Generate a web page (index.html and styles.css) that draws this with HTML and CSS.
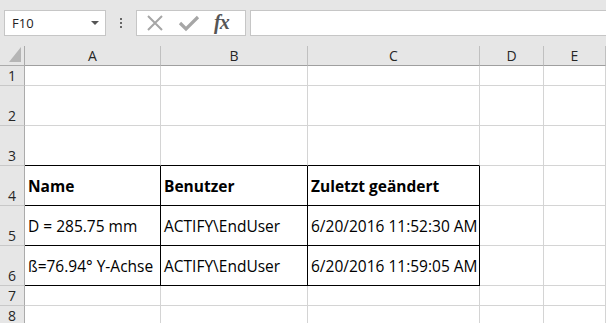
FILE: index.html
```html
<!DOCTYPE html>
<html lang="de">
<head>
    <meta charset="UTF-8">
    <title>Mappe1 - Excel</title>
    <link rel="stylesheet" href="styles.css">
</head>
<body>
    <div class="formula-bar">
        <div class="name-box">
            <span>F10</span>
            <span class="caret"></span>
        </div>
        <div class="grip"><i></i><i></i><i></i></div>
        <div class="fx-buttons">
            <svg class="icon-cancel" width="18" height="18" viewBox="0 0 18 18">
                <path d="M2 2 L16 16 M16 2 L2 16" stroke="#a6a6a6" stroke-width="2" fill="none"/>
            </svg>
            <svg class="icon-enter" width="22" height="18" viewBox="0 0 22 18">
                <path d="M2 9 L8 15 L20 3" stroke="#a6a6a6" stroke-width="3.2" fill="none"/>
            </svg>
            <span class="fx">fx</span>
        </div>
        <div class="formula-input"></div>
    </div>

    <div class="sheet">
        <div class="corner"><span class="corner-mark"></span></div>
        <div class="col-head">A</div>
        <div class="col-head">B</div>
        <div class="col-head">C</div>
        <div class="col-head">D</div>
        <div class="col-head">E</div>

        <div class="row-head">1</div>
        <div class="cell"></div><div class="cell"></div><div class="cell"></div><div class="cell"></div><div class="cell"></div>

        <div class="row-head">2</div>
        <div class="cell"></div><div class="cell"></div><div class="cell"></div><div class="cell"></div><div class="cell"></div>

        <div class="row-head">3</div>
        <div class="cell edge-bottom"></div><div class="cell edge-bottom"></div><div class="cell edge-bottom"></div><div class="cell"></div><div class="cell"></div>

        <div class="row-head">4</div>
        <div class="cell boxed bold">Name</div>
        <div class="cell boxed bold">Benutzer</div>
        <div class="cell boxed bold">Zuletzt geändert</div>
        <div class="cell"></div><div class="cell"></div>

        <div class="row-head">5</div>
        <div class="cell boxed">D = 285.75 mm</div>
        <div class="cell boxed">ACTIFY\EndUser</div>
        <div class="cell boxed">6/20/2016 11:52:30 AM</div>
        <div class="cell"></div><div class="cell"></div>

        <div class="row-head">6</div>
        <div class="cell boxed">ß=76.94° Y-Achse</div>
        <div class="cell boxed">ACTIFY\EndUser</div>
        <div class="cell boxed">6/20/2016 11:59:05 AM</div>
        <div class="cell"></div><div class="cell"></div>

        <div class="row-head">7</div>
        <div class="cell"></div><div class="cell"></div><div class="cell"></div><div class="cell"></div><div class="cell"></div>

        <div class="row-head">8</div>
        <div class="cell"></div><div class="cell"></div><div class="cell"></div><div class="cell"></div><div class="cell"></div>
    </div>
</body>
</html>
```

FILE: styles.css
```css
* {
    box-sizing: border-box;
}
body {
    margin: 0;
    width: 606px;
    height: 323px;
    overflow: hidden;
    background: #fff;
    font-family: 'Open Sans', 'Noto Sans', sans-serif;
    color: #000;
}
.formula-bar {
    height: 46px;
    background: #e6e6e6;
    display: flex;
    align-items: flex-start;
    padding: 10px 0 0 4px;
}
.name-box {
    width: 102px;
    height: 26px;
    background: #fff;
    border: 1px solid #c6c6c6;
    display: flex;
    align-items: center;
    justify-content: space-between;
    padding: 0 6px 0 7px;
    font-size: 13px;
    color: #222;
}
.caret {
    width: 0;
    height: 0;
    border-left: 4px solid transparent;
    border-right: 4px solid transparent;
    border-top: 4px solid #555;
}
.grip {
    width: 30px;
    height: 26px;
    display: flex;
    flex-direction: column;
    align-items: center;
    justify-content: center;
    gap: 2px;
}
.grip i {
    width: 2px;
    height: 2px;
    background: #666;
}
.fx-buttons {
    width: 110px;
    height: 26px;
    background: #fff;
    border: 1px solid #c6c6c6;
    display: flex;
    align-items: center;
    padding-left: 9px;
}
.icon-cancel {
    margin-right: 14px;
}
.icon-enter {
    margin-right: 14px;
}
.fx {
    font-family: 'Liberation Serif', serif;
    font-style: italic;
    font-weight: bold;
    font-size: 20px;
    color: #555;
    letter-spacing: -1px;
    line-height: 1;
    margin-top: -2px;
}
.formula-input {
    flex: 1;
    height: 26px;
    margin-left: 4px;
    background: #fff;
    border: 1px solid #c6c6c6;
    border-right: none;
}
.sheet {
    display: grid;
    grid-template-columns: 25px 136px 147px 172px 64px 1fr;
    grid-template-rows: 20px 20px 40px 40px 40px 40px 40px 20px 20px;
}
.corner, .col-head, .row-head {
    background: #e6e6e6;
    color: #262626;
}
.corner {
    border-right: 1px solid #ababab;
    border-bottom: 1px solid #ababab;
    position: relative;
}
.corner-mark {
    position: absolute;
    right: 3px;
    bottom: 3px;
    width: 0;
    height: 0;
    border-left: 12px solid transparent;
    border-bottom: 15px solid #b5b5b5;
}
.col-head {
    border-right: 1px solid #c0c0c0;
    border-bottom: 1px solid #9f9f9f;
    display: flex;
    align-items: center;
    justify-content: center;
    font-size: 14px;
}
.row-head {
    border-right: 1px solid #ababab;
    border-bottom: 1px solid #c8c8c8;
    display: flex;
    align-items: flex-end;
    justify-content: center;
    font-size: 14px;
    line-height: 18px;
}
.cell {
    border-right: 1px solid #d4d4d4;
    border-bottom: 1px solid #d4d4d4;
    display: flex;
    align-items: center;
    padding-left: 3px;
    font-size: 15.5px;
    white-space: nowrap;
    overflow: hidden;
}
.cell.edge-bottom {
    border-bottom-color: #000;
}
.cell.boxed {
    border-right-color: #000;
    border-bottom-color: #000;
}
.cell.bold {
    font-weight: bold;
}
```
